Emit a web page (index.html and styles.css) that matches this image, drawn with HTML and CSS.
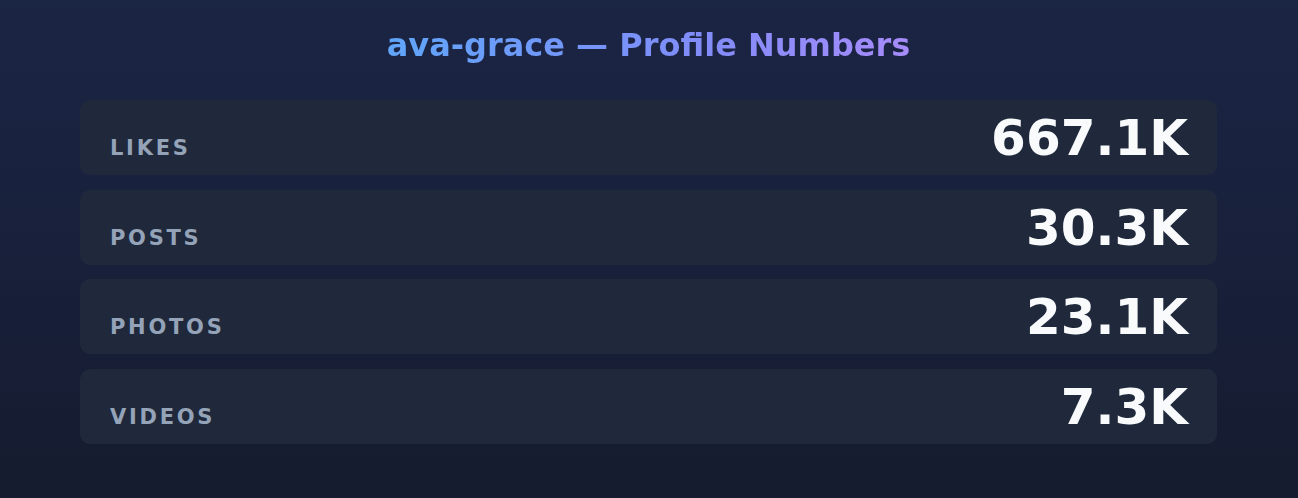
FILE: index.html
```html
<!DOCTYPE html>
<html lang="en">
<head>
<meta charset="utf-8">
<title>ava-grace — Profile Numbers</title>
<link rel="stylesheet" href="styles.css">
</head>
<body>
<main class="page">
  <h1 class="title">ava-grace — Profile Numbers</h1>
  <section class="stats">
    <div class="stat"><span class="stat-label">Likes</span><span class="stat-value">667.1K</span></div>
    <div class="stat"><span class="stat-label">Posts</span><span class="stat-value">30.3K</span></div>
    <div class="stat"><span class="stat-label">Photos</span><span class="stat-value">23.1K</span></div>
    <div class="stat"><span class="stat-label">Videos</span><span class="stat-value">7.3K</span></div>
  </section>
</main>
</body>
</html>
```
FILE: styles.css
```css
html, body {
  margin: 0;
  height: 100%;
}
body {
  background: linear-gradient(180deg, #1b2544 0%, #18203b 50%, #151c2f 100%);
  font-family: "DejaVu Sans", "Liberation Sans", sans-serif;
  color: #f8fafc;
}
.page {
  padding: 27px 81px 0 80px;
}
.title {
  margin: 0 auto 36px;
  width: max-content;
  font-size: 32px;
  font-weight: 700;
  line-height: 37px;
  background: linear-gradient(90deg, #60a5fa 0%, #818cf8 60%, #a78bfa 100%);
  -webkit-background-clip: text;
  background-clip: text;
  color: transparent;
}
.stats {
  display: flex;
  flex-direction: column;
  gap: 14.7px;
}
.stat {
  display: flex;
  justify-content: space-between;
  align-items: baseline;
  height: 75px;
  box-sizing: border-box;
  padding: 13px 29px 12px 30px;
  background: #1f293b;
  border-radius: 10px;
}
.stat-label {
  font-size: 21px;
  font-weight: 700;
  letter-spacing: 0.13em;
  text-transform: uppercase;
  color: #94a3b8;
}
.stat-value {
  font-size: 50px;
  font-weight: 700;
  line-height: 50px;
  color: #f8fafc;
}
```
